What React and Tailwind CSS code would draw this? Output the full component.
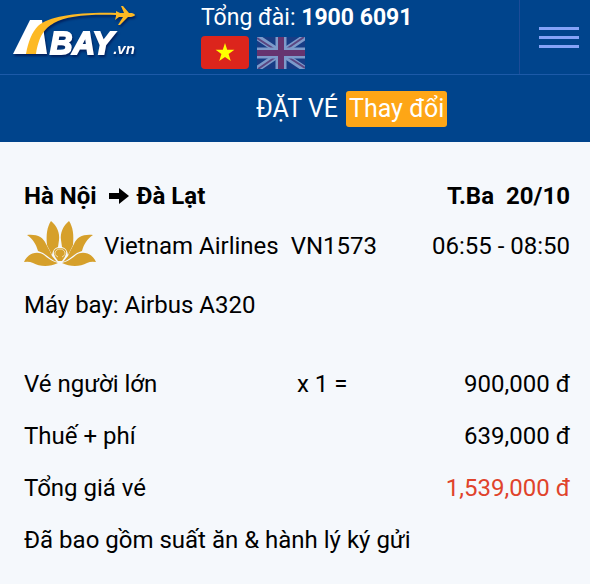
import React from "react";

const fares = [
  { label: "Vé người lớn", qty: "x 1 =", amount: "900,000 đ" },
  { label: "Thuế + phí", qty: "", amount: "639,000 đ" },
  { label: "Tổng giá vé", qty: "", amount: "1,539,000 đ", total: true },
];

function Logo() {
  return (
    <svg viewBox="0 0 132 60" className="h-[60px] w-[132px] drop-shadow-[1px_2px_1px_#001f5c]" role="img" aria-label="ABAY.vn">
      <path d="M5 50 22 16h12l5 34z" fill="#fff" />
      <text x="42" y="50" fill="#fff" className="font-['Liberation_Sans'] font-bold italic">
        <tspan fontSize="31" stroke="#fff" strokeWidth="2">BAY</tspan>
        <tspan fontSize="15">.vn</tspan>
      </text>
      <path d="M18 50C20 38 24 28 30 22C42 12 70 8 109 9V11C80 10 58 12 46 19C36 25 31 32 28 50Z" fill="#fdb924" />
      <path
        d="M108 7l4 2h4l-3-7h2l6 7h3q3 1 3 2t-4 2h-3l-8 8h-2l5-8h-4l-4 3 1-4z"
        fill="#fdb924"
      />
    </svg>
  );
}

function FlagVN() {
  return (
    <svg viewBox="0 0 48 33" className="h-[33px] w-12">
      <rect width="48" height="33" rx="4" fill="#dc251c" />
      <path d="M24 7l2.2 6.8h7.2l-5.8 4.3 2.2 7L24 20.9l-5.8 4.2 2.2-7-5.8-4.3h7.2z" fill="#ff0" />
    </svg>
  );
}

function FlagUK() {
  return (
    <svg viewBox="0 0 48 32" className="h-8 w-12">
      <rect width="48" height="32" fill="#173c85" />
      <path d="M0 0 48 32M48 0 0 32" stroke="#7d9aca" strokeWidth="6" />
      <path d="M0 1 20 14M48 31 28 18M47 0 28 13M1 32 20 19" stroke="#5b4682" strokeWidth="2" />
      <path d="M24 0V32M0 16H48" stroke="#7d9aca" strokeWidth="11" />
      <path d="M24 0V32M0 16H48" stroke="#66346f" strokeWidth="6" />
    </svg>
  );
}

function Lotus() {
  return (
    <svg viewBox="0 0 72 46" className="h-[46px] w-[72px] shrink-0 self-start" role="img" aria-label="Vietnam Airlines">
      <g fill="#d6a02b">
        <path d="M27 0C33 5 36 12 35 19L34 26Q29 27 28 34L23 24C22 14 23 6 27 0Z" />
        <path d="M45 0C39 5 36 12 37 19L38 26Q43 27 44 34L49 24C50 14 49 6 45 0Z" />
        <path d="M3 14C13 13 19 16 22 23Q26 30 28 35L33 41C26 39 22 32 14 30C12 23 9 18 3 14Z" />
        <path d="M69 14C59 13 53 16 50 23Q46 30 44 35L39 41C46 39 50 32 58 30C60 23 63 18 69 14Z" />
        <path d="M0 41C3 33 13 29 20 34Q25 39 34 42C26 46 16 46 9 42Q5 40 0 41Z" />
        <path d="M72 41C69 33 59 29 52 34Q47 39 38 42C46 46 56 46 63 42Q67 40 72 41Z" />
        <path d="M30 30Q31 27 36 27T42 30Q43 34 38 40H34Q29 34 30 30Z" />
      </g>
      <path d="M34 36C28 33 32 28 36 28S44 33 38 36" fill="none" stroke="#f3dfae" strokeWidth="1" />
    </svg>
  );
}

export default function App() {
  return (
    <div className="min-h-screen bg-[#f5f8fc] font-[Roboto,sans-serif] text-2xl text-black">
      <header className="bg-[#00448c] text-white">
        <div className="flex h-[75px] border-b border-[#1c5aa8]">
          <a href="#" className="w-[201px] shrink-0 pt-1 pl-2">
            <Logo />
          </a>
          <div className="flex-1">
            <p className="pt-1 text-[23px] leading-7">
              Tổng đài: <a href="tel:19006091" className="font-bold">1900 6091</a>
            </p>
            <div className="flex gap-2 pt-1">
              <button type="button" aria-label="Tiếng Việt"><FlagVN /></button>
              <button type="button" aria-label="English"><FlagUK /></button>
            </div>
          </div>
          <button
            type="button"
            aria-label="Menu"
            className="flex w-[71px] flex-col items-center justify-center gap-[6px] border-l border-[#1c4c98] pl-2"
          >
            <span className="h-[3px] w-10 bg-[#85a3f8]" />
            <span className="h-[3px] w-10 bg-[#85a3f8]" />
            <span className="h-[3px] w-10 bg-[#85a3f8]" />
          </button>
        </div>
        <div className="flex h-[67px] items-center gap-2 pl-64 text-[25px]">
          <h1>ĐẶT VÉ</h1>
          <button type="button" className="h-9 rounded-[3px] bg-[#fea616] px-[3px]">Thay đổi</button>
        </div>
      </header>

      <main className="px-5 pt-7 pl-6">
        <section>
          <div className="flex h-[51px] items-center justify-between font-bold">
            <h2 className="flex items-center">
              Hà Nội
              <svg viewBox="0 0 20 16" className="mr-2 ml-3 h-4 w-5">
                <path d="M0 5h10V0l10 8-10 8v-5H0z" />
              </svg>
              Đà Lạt
            </h2>
            <p className="flex gap-3"><span>T.Ba</span><span>20/10</span></p>
          </div>
          <div className="flex h-[50px] items-center">
            <Lotus />
            <span className="pl-2">Vietnam Airlines</span>
            <span className="pl-3">VN1573</span>
            <span className="ml-auto">06:55 - 08:50</span>
          </div>
          <p className="flex h-[67px] items-center">Máy bay: Airbus A320</p>
        </section>

        <table className="mt-5 w-full">
          <tbody>
            {fares.map((f) => (
              <tr key={f.label} className="h-[52px]">
                <th scope="row" className="w-1/2 text-left font-normal">{f.label}</th>
                <td>{f.qty}</td>
                <td className={f.total ? "text-right text-[#e0432b]" : "text-right"}>{f.amount}</td>
              </tr>
            ))}
          </tbody>
        </table>
        <p className="flex h-[52px] items-center">Đã bao gồm suất ăn &amp; hành lý ký gửi</p>
      </main>
    </div>
  );
}
